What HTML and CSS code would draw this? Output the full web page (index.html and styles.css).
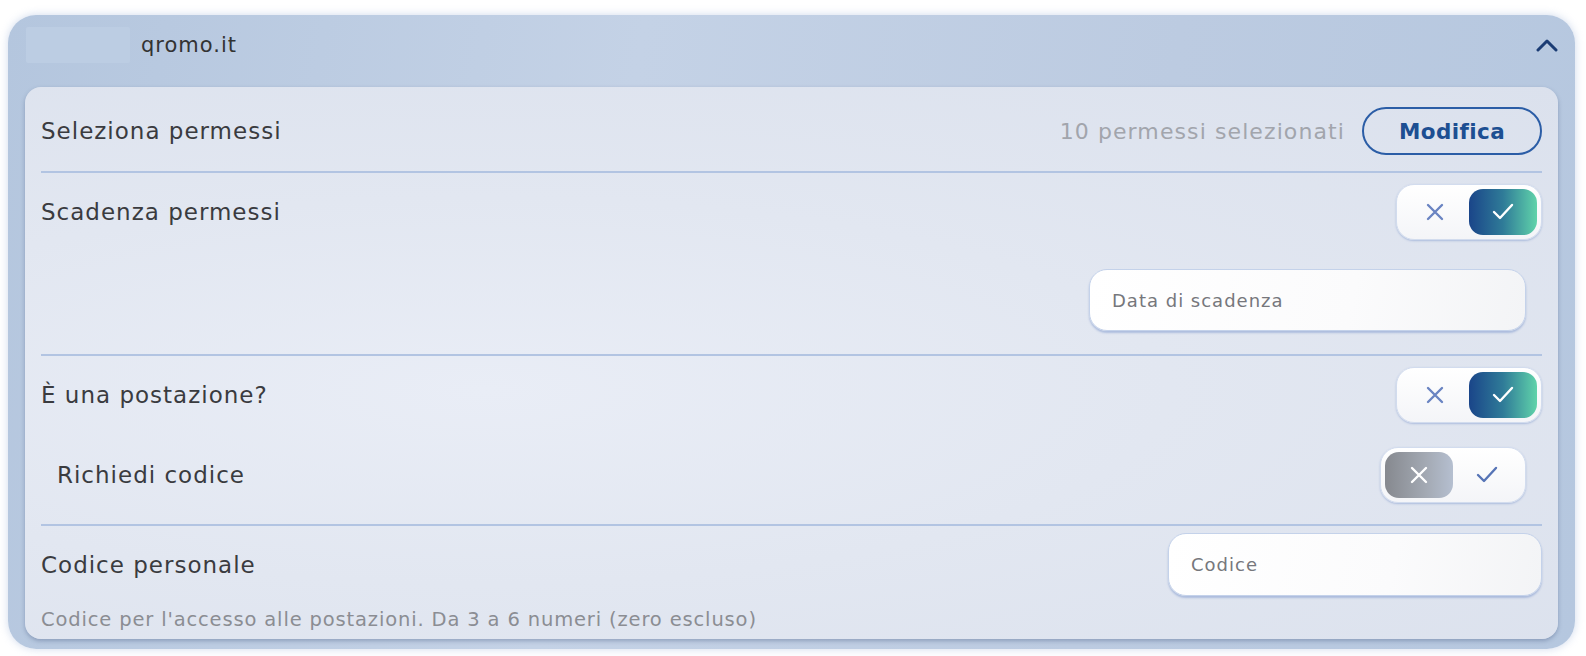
FILE: index.html
```html
<html>

<head>
  <link rel="stylesheet" href="styles.css">
</head>

<body>
  <div class="page">
    <div class="panel">
      <div class="panel-head">
        <div class="redacted"></div>
        <span class="domain">qromo.it</span>
        <svg class="chevron" width="22" height="14" viewBox="0 0 22 14">
          <polyline points="2,12 11,3 20,12" fill="none" stroke="#1b3c74" stroke-width="3" stroke-linecap="round" stroke-linejoin="round" />
        </svg>
      </div>

      <div class="card">
        <!-- permessi -->
        <div class="row row-perms">
          <label class="lbl">Seleziona permessi</label>
          <div class="perms-right">
            <span class="muted">10 permessi selezionati</span>
            <button class="btn-outline">Modifica</button>
          </div>
        </div>

        <!-- scadenza -->
        <div class="row row-expiry">
          <div class="line">
            <label class="lbl">Scadenza permessi</label>
            <div class="toggle on">
              <span class="opt"><svg width="22" height="22" viewBox="0 0 22 22"><path d="M4 4 L18 18 M18 4 L4 18" stroke="#6a84c2" stroke-width="2.4" stroke-linecap="round" /></svg></span>
              <span class="opt active"><svg width="24" height="22" viewBox="0 0 24 22"><polyline points="3,11 9,17 21,4" fill="none" stroke="#fff" stroke-width="2.4" stroke-linecap="round" stroke-linejoin="round" /></svg></span>
            </div>
          </div>
          <div class="line end">
            <input class="field field-date" placeholder="Data di scadenza">
          </div>
        </div>

        <!-- postazione -->
        <div class="row row-station">
          <div class="line">
            <label class="lbl">È una postazione?</label>
            <div class="toggle on">
              <span class="opt"><svg width="22" height="22" viewBox="0 0 22 22"><path d="M4 4 L18 18 M18 4 L4 18" stroke="#6a84c2" stroke-width="2.4" stroke-linecap="round" /></svg></span>
              <span class="opt active"><svg width="24" height="22" viewBox="0 0 24 22"><polyline points="3,11 9,17 21,4" fill="none" stroke="#fff" stroke-width="2.4" stroke-linecap="round" stroke-linejoin="round" /></svg></span>
            </div>
          </div>
          <div class="line sub">
            <label class="lbl">Richiedi codice</label>
            <div class="toggle off">
              <span class="opt active"><svg width="22" height="22" viewBox="0 0 22 22"><path d="M4 4 L18 18 M18 4 L4 18" stroke="#fff" stroke-width="2.4" stroke-linecap="round" /></svg></span>
              <span class="opt"><svg width="24" height="22" viewBox="0 0 24 22"><polyline points="3,11 9,17 21,4" fill="none" stroke="#5674b6" stroke-width="2.4" stroke-linecap="round" stroke-linejoin="round" /></svg></span>
            </div>
          </div>
        </div>

        <!-- codice -->
        <div class="row row-code">
          <div class="line">
            <label class="lbl">Codice personale</label>
            <input class="field field-code" placeholder="Codice">
          </div>
          <p class="hint">Codice per l'accesso alle postazioni. Da 3 a 6 numeri (zero escluso)</p>
        </div>
      </div>
    </div>
  </div>
</body>

</html>
```

FILE: styles.css
```css
body {
  margin: 0;
  padding: 0;
  background: #fff;
  font-family: 'DejaVu Sans', sans-serif;
  color: #3b3c40;
}

.page {
  padding: 15px 11px 7px 8px;
}

.panel {
  border-radius: 28px;
  background: linear-gradient(100deg, #b4c6de 0%, #c4d2e6 38%, #bccbe1 70%, #b5c7df 100%);
  box-shadow: 0 0 8px rgba(150, 172, 212, 0.45);
  padding: 0 17px 10px 17px;
}

.panel-head {
  height: 60px;
  display: flex;
  align-items: center;
}

.redacted {
  width: 104px;
  height: 36px;
  margin-left: 1px;
  background: #bccde3;
  border-radius: 2px;
}

.domain {
  font-size: 21px;
  margin-left: 11px;
  color: #333;
  letter-spacing: 1px;
}

.chevron {
  margin-left: auto;
  margin-right: 0;
}

.card {
  margin-top: 12px;
  border-radius: 16px;
  background: radial-gradient(ellipse at 30% 55%, #e9edf6 0%, #e2e7f1 45%, #dbe1ed 100%);
  box-shadow: 0 2px 4px rgba(70, 90, 130, 0.4);
  padding: 0 16px 8px 16px;
}

.row {
  border-bottom: 2px solid #b2c4e2;
}

.row-code {
  border-bottom: none;
}

.lbl {
  font-size: 23px;
  letter-spacing: 1px;
  color: #3a3b3f;
}

.row-perms {
  display: flex;
  align-items: center;
  justify-content: space-between;
  padding: 20px 0 16px 0;
}

.perms-right {
  display: flex;
  align-items: center;
  gap: 17px;
}

.muted {
  font-size: 22px;
  letter-spacing: 1.1px;
  color: #a2a5ac;
}

.btn-outline {
  width: 180px;
  height: 48px;
  border: 2px solid #2b5da6;
  border-radius: 24px;
  background: transparent;
  font-family: 'DejaVu Sans', sans-serif;
  font-weight: bold;
  font-size: 21.5px;
  color: #1d4f92;
  letter-spacing: 0.4px;
}

.line {
  display: flex;
  align-items: center;
  justify-content: space-between;
}

.line.end {
  justify-content: flex-end;
  padding-right: 16px;
}

.line.sub {
  padding: 0 16px;
}

.row-expiry {
  padding: 11px 0 23px 0;
}

.row-expiry .line.end {
  margin-top: 29px;
}

.row-station {
  padding: 11px 0 21px 0;
}

.row-station .line.sub {
  margin-top: 24px;
}

.row-code {
  padding-top: 7px;
}

.toggle {
  display: flex;
  padding: 4px;
  width: 136px;
  height: 46px;
  border-radius: 18px;
  background: linear-gradient(180deg, #ffffff, #f4f5f8);
  border: 1px solid #d2dcee;
  box-shadow: 0 1px 2px rgba(110, 140, 200, 0.45);
}

.opt {
  flex: 1;
  display: flex;
  align-items: center;
  justify-content: center;
  border-radius: 14px;
}

.toggle.on .opt.active {
  background: linear-gradient(90deg, #1a4589 0%, #2f7b98 50%, #60d3aa 100%);
}

.toggle.off .opt.active {
  background: linear-gradient(90deg, #86898f 0%, #a3a9b3 60%, #b5bfd0 100%);
}

.field {
  height: 62px;
  border-radius: 18px;
  border: 1px solid #c4d2ea;
  background: linear-gradient(100deg, #ffffff 0%, #fbfbfc 60%, #f3f4f6 100%);
  box-shadow: 0 2px 2px rgba(110, 140, 200, 0.45);
  padding: 0 22px;
  font-family: 'DejaVu Sans', sans-serif;
  font-size: 18px;
  letter-spacing: 1px;
  outline: none;
  box-sizing: border-box;
}

.field::placeholder {
  color: #76777c;
}

.field-date {
  width: 437px;
}

.field-code {
  width: 374px;
  height: 63px;
}

.hint {
  margin: 12px 0 0 0;
  font-size: 19.5px;
  letter-spacing: 0.85px;
  color: #8b8d93;
}
```
